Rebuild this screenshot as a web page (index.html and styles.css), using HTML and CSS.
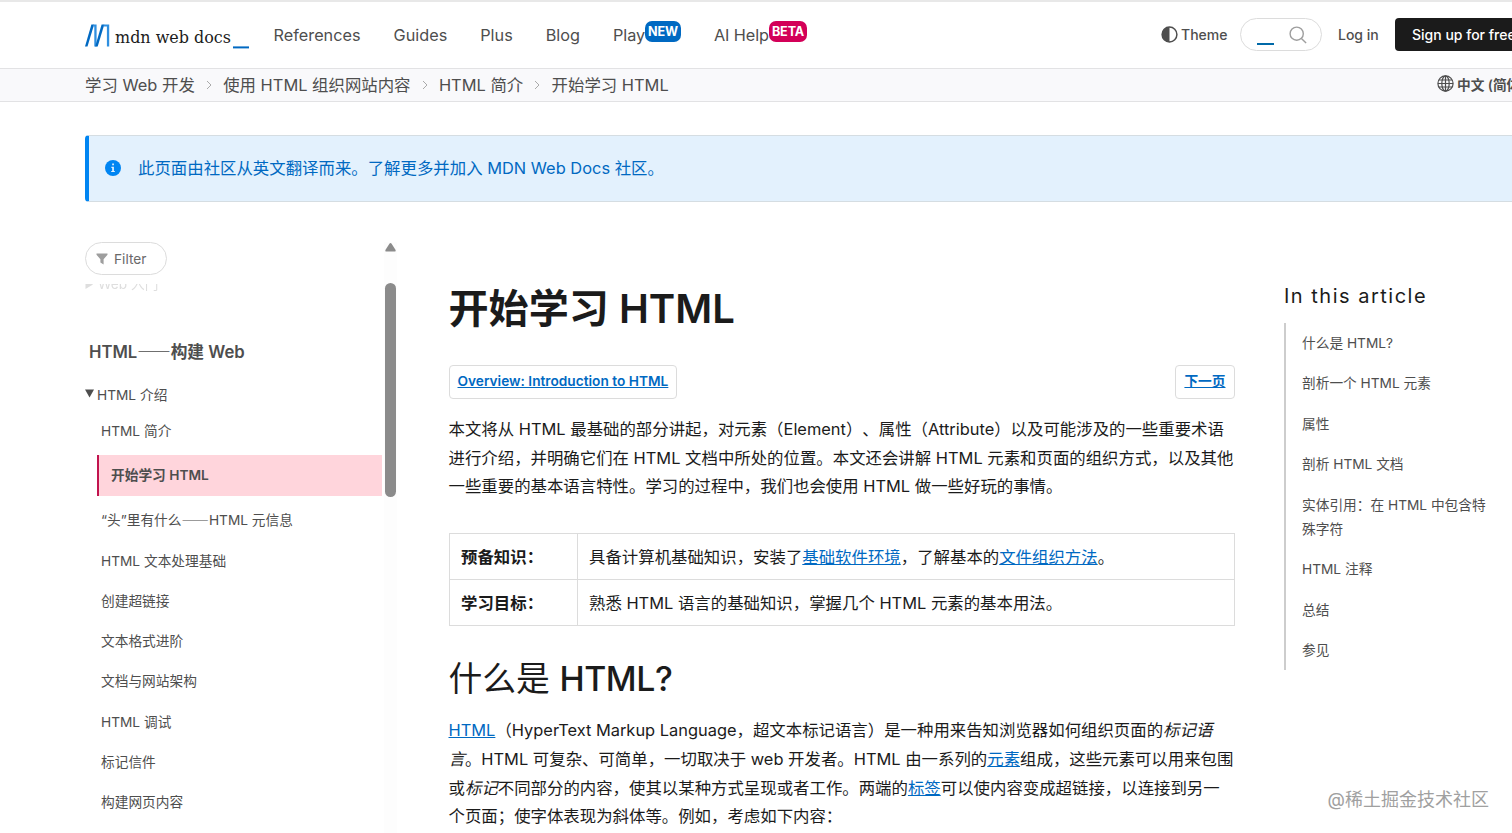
FILE: index.html
```
<!DOCTYPE html>
<html lang="zh-CN">
<head>
  <meta charset="UTF-8">
  <meta name="viewport" content="width=device-width, initial-scale=1.0">
  <title>开始学习 HTML - 学习 Web 开发 | MDN</title>
  <link rel="stylesheet" href="styles.css">
</head>
<body>
  <header class="top-nav">
    <a class="logo" href="#">
      <svg width="164" height="30" viewBox="0 0 164 30">
        <g fill="#0069c2">
          <path d="M6.4 3.5h2.7L2.5 25.5H0z"></path>
          <path d="M8.6 3.5h3v22H9.3v-20h-.9z" fill="#2f8fe0"></path>
          <path d="M16.6 3.5h2.7l-6.6 22h-2.5z"></path>
          <path d="M18.8 3.5h5.4v22h-2.3v-20h-3.5z" fill="#2f8fe0"></path>
          <path d="M148 25.4h16v2h-16z"></path>
        </g>
        <text class="logo-text" x="30" y="21.5" textLength="116" lengthAdjust="spacingAndGlyphs">mdn web docs</text>
      </svg>
    </a>
    <nav class="main-menu">
      <a href="#">References</a>
      <a href="#">Guides</a>
      <a href="#">Plus</a>
      <a href="#">Blog</a>
      <a href="#">Play<sup class="badge new">NEW</sup></a>
      <a href="#">AI Help<sup class="badge beta">BETA</sup></a>
    </nav>
    <div class="actions">
      <button class="theme">
        <svg width="17" height="17" viewBox="0 0 17 17">
          <circle cx="8.5" cy="8.5" r="7.4" fill="none" stroke="#4e4e4e" stroke-width="1.5"></circle>
          <path d="M8.5 1a7.5 7.5 0 0 0 0 15z" fill="#4e4e4e"></path>
        </svg>
        Theme
      </button>
      <div class="search">
        <span class="cursor"></span>
        <svg width="18" height="18" viewBox="0 0 18 18" fill="none" stroke="#9e9e9e" stroke-width="1.4">
          <circle cx="7.7" cy="7.7" r="6.6"></circle>
          <path d="M12.4 12.4l4.7 4.7"></path>
        </svg>
      </div>
      <a class="login" href="#">Log in</a>
      <a class="signup" href="#">Sign up for free</a>
    </div>
  </header>

  <div class="breadcrumbs">
    <a href="#">学习 Web 开发</a>
    <svg class="sep" width="6" height="10" viewBox="0 0 6 10"><path d="M1 1l4 4-4 4"></path></svg>
    <a href="#">使用 HTML 组织网站内容</a>
    <svg class="sep" width="6" height="10" viewBox="0 0 6 10"><path d="M1 1l4 4-4 4"></path></svg>
    <a href="#">HTML 简介</a>
    <svg class="sep" width="6" height="10" viewBox="0 0 6 10"><path d="M1 1l4 4-4 4"></path></svg>
    <a href="#">开始学习 HTML</a>
    <button class="language">
      <svg width="17" height="17" viewBox="0 0 17 17" fill="none" stroke="#4e4e4e" stroke-width="1.2">
        <circle cx="8.5" cy="8.5" r="7.6"></circle>
        <ellipse cx="8.5" cy="8.5" rx="3.7" ry="7.6"></ellipse>
        <path d="M8.5 1v15M1 8.5h15M2 5h13M2 12h13"></path>
      </svg>
      中文 (简体)
    </button>
  </div>

  <div class="notice">
    <svg width="16" height="16" viewBox="0 0 16 16">
      <circle cx="8" cy="8" r="8" fill="#0085f2"></circle>
      <path d="M7.2 3.6h1.7v1.7H7.2zM6.4 6.7h2.5v4.2h.9v1.2H6.2v-1.2h1V7.9h-.8z" fill="#e3f1fd"></path>
    </svg>
    <a href="#">此页面由社区从英文翻译而来。了解更多并加入 MDN Web Docs 社区。</a>
  </div>

  <div class="layout">
    <aside class="sidebar">
      <div class="sidebar-inner">
        <div class="filter">
          <svg width="12" height="12" viewBox="0 0 12 12"><path d="M.5.5h11v1.2L7.6 6.2v5.3L4.4 9.6V6.2L.5 1.7z" fill="#9e9e9e"></path></svg>
          Filter
        </div>
        <div class="faded">
          <svg width="8" height="9" viewBox="0 0 8 9"><path d="M.5 0L8 4.5.5 9z" fill="#dedede"></path></svg>
          <span>Web 入门</span>
        </div>
        <h4>HTML<span class="dash">——</span>构建 Web</h4>
        <div class="summary"><svg width="9" height="9" viewBox="0 0 9 9"><path d="M0 .5h9L4.5 8.5z" fill="#4e4e4e"></path></svg>HTML 介绍</div>
        <ul>
          <li><a href="#">HTML 简介</a></li>
          <li class="current"><a href="#">开始学习 HTML</a></li>
          <li><a href="#">“头”里有什么<span class="dash">——</span>HTML 元信息</a></li>
          <li><a href="#">HTML 文本处理基础</a></li>
          <li><a href="#">创建超链接</a></li>
          <li><a href="#">文本格式进阶</a></li>
          <li><a href="#">文档与网站架构</a></li>
          <li><a href="#">HTML 调试</a></li>
          <li><a href="#">标记信件</a></li>
          <li><a href="#">构建网页内容</a></li>
        </ul>
      </div>
      <div class="scrollbar">
        <svg width="11" height="9" viewBox="0 0 11 9"><path d="M5.5 0Q6.1 0 6.6.8L10.6 7Q11 8.5 10 8.5H1Q0 8.5.4 7L4.4.8Q4.9 0 5.5 0z" fill="#8b8b8b"></path></svg>
        <div class="thumb"></div>
      </div>
    </aside>

    <main class="content">
      <h1>开始学习 HTML</h1>
      <div class="prev-next">
        <a href="#">Overview: Introduction to HTML</a>
        <a href="#">下一页</a>
      </div>
      <p>本文将从 HTML 最基础的部分讲起，对元素（Element）、属性（Attribute）以及可能涉及的一些重要术语<br>进行介绍，并明确它们在 HTML 文档中所处的位置。本文还会讲解 HTML 元素和页面的组织方式，以及其他<br>一些重要的基本语言特性。学习的过程中，我们也会使用 HTML 做一些好玩的事情。</p>
      <table>
        <tbody>
          <tr>
            <th>预备知识：</th>
            <td>具备计算机基础知识，安装了<a href="#">基础软件环境</a>，了解基本的<a href="#">文件组织方法</a>。</td>
          </tr>
          <tr>
            <th>学习目标：</th>
            <td>熟悉 HTML 语言的基础知识，掌握几个 HTML 元素的基本用法。</td>
          </tr>
        </tbody>
      </table>
      <h2>什么是 <span>HTML?</span></h2>
      <p><a href="#">HTML</a>（HyperText Markup Language，超文本标记语言）是一种用来告知浏览器如何组织页面的<em>标记语<br>言</em>。HTML 可复杂、可简单，一切取决于 web 开发者。HTML 由一系列的<a href="#">元素</a>组成，这些元素可以用来包围<br>或<em>标记</em>不同部分的内容，使其以某种方式呈现或者工作。两端的<a href="#">标签</a>可以使内容变成超链接，以连接到另一<br>个页面；使字体表现为斜体等。例如，考虑如下内容：</p>
    </main>

    <aside class="toc">
      <h2>In this article</h2>
      <ul>
        <li><a href="#">什么是 HTML?</a></li>
        <li><a href="#">剖析一个 HTML 元素</a></li>
        <li><a href="#">属性</a></li>
        <li><a href="#">剖析 HTML 文档</a></li>
        <li><a href="#">实体引用：在 HTML 中包含特<br>殊字符</a></li>
        <li><a href="#">HTML 注释</a></li>
        <li><a href="#">总结</a></li>
        <li><a href="#">参见</a></li>
      </ul>
    </aside>
  </div>

  <div class="watermark">@稀土掘金技术社区</div>
</body>
</html>
```
FILE: styles.css
```
* {
  box-sizing: border-box;
}

body {
  margin: 0;
  height: 833px;
  overflow: hidden;
  position: relative;
  background-color: #fff;
  color: #1b1b1b;
  font-family: Inter, "Noto Sans CJK SC", sans-serif;
  font-size: 16.42px;
  text-spacing-trim: space-all;
  white-space: nowrap;
}

a {
  color: inherit;
  text-decoration: none;
}

button {
  border: 0;
  padding: 0;
  background: none;
  font: inherit;
  color: inherit;
}

ul {
  list-style: none;
  margin: 0;
  padding: 0;
}

.dash {
  font-family: "Noto Sans CJK SC", sans-serif;
  line-height: 1;
}

/* header */
.top-nav {
  display: flex;
  align-items: center;
  height: 69px;
  padding-left: 85px;
  border-top: 2px solid #e8e8e8;
  border-bottom: 1px solid #e2e2e4;
  color: #4e4e4e;
}

.top-nav > * {
  flex-shrink: 0;
}

.logo svg {
  display: block;
  margin-top: 2px;
}

.logo-text {
  font-family: "DejaVu Serif", serif;
  font-size: 17px;
  fill: #1b1b1b;
}

.main-menu {
  display: flex;
  gap: 33px;
  margin-left: 24.6px;
  font-size: 16.25px;
}

.badge {
  display: inline-block;
  height: 21px;
  line-height: 21px;
  padding: 0 3px;
  border-radius: 7px;
  color: #fff;
  font-size: 12.6px;
  font-weight: 700;
  vertical-align: 5px;
  margin: -10px 0;
}

.main-menu a:nth-child(n+5) {
  letter-spacing: -0.1px;
}

.new {
  background-color: #0069c2;
}

.beta {
  background-color: #d30058;
}

.actions {
  display: flex;
  align-items: center;
  width: 351px;
  margin-left: auto;
  padding-bottom: 1px;
  font-size: 14px;
  font-weight: 500;
}

.actions > * {
  flex-shrink: 0;
}

.theme {
  display: flex;
  align-items: center;
  gap: 3px;
  width: 79px;
}

.search {
  display: flex;
  align-items: center;
  justify-content: space-between;
  width: 82px;
  height: 33px;
  padding: 0 14px 0 16px;
  border: 1px solid #dcdcdc;
  border-radius: 17px;
}

.cursor {
  width: 17px;
  height: 2px;
  margin-top: 18px;
  background-color: #0069a8;
}

.login {
  margin-left: 16px;
  width: 57px;
}

.signup {
  height: 33px;
  line-height: 33px;
  padding: 0 17px;
  border-radius: 4px;
  background-color: #1b1b1b;
  color: #fff;
}

.breadcrumbs {
  display: flex;
  align-items: center;
  height: 33px;
  padding: 0 0 3px 85px;
  border-bottom: 1px solid #e2e2e4;
  background-color: #f9f9fb;
  color: #4e4e4e;
}

.sep {
  margin: 2px 11.2px 0;
  fill: none;
  stroke: #aaa;
}

.language {
  display: flex;
  align-items: center;
  gap: 3px;
  width: 75px;
  margin-left: auto;
  font-size: 13.7px;
  font-weight: 600;
}

.language svg {
  flex-shrink: 0;
}

.notice {
  display: flex;
  align-items: center;
  gap: 17px;
  height: 67px;
  margin: 33px 0 0 85px;
  padding: 0 0 2px 16px;
  border: 1px solid #d5dde2;
  border-left: 4px solid #0085f2;
  border-right: 0;
  border-radius: 4px 0 0 4px;
  background-color: #e3f1fd;
  color: #0069c2;
}

.notice a {
  margin-top: -2px;
}

.layout {
  display: grid;
  grid-template-columns: 312px 786px 1fr;
  padding-left: 85px;
}

/* sidebar */
.sidebar {
  display: flex;
  height: 631px;
  padding-top: 40px;
  color: #4e4e4e;
  font-size: 13.7px;
}

.sidebar-inner {
  width: 297px;
}

.filter {
  display: flex;
  align-items: center;
  gap: 6px;
  width: 82px;
  height: 33px;
  padding-left: 10px;
  border: 1px solid #dcdcdc;
  border-radius: 17px;
  color: #696969;
}

.faded {
  display: flex;
  align-items: center;
  gap: 5px;
  height: 17px;
  margin-top: 1px;
  overflow: hidden;
  color: #dedede;
  -webkit-mask-image: linear-gradient(transparent 50%, #000 50%);
  mask-image: linear-gradient(transparent 50%, #000 50%);
}

.faded span {
  line-height: 17px;
}

.sidebar h4 {
  margin: 47px 0 0 4px;
  font-size: 16.7px;
  font-weight: 600;
  line-height: 24px;
}

.summary {
  display: flex;
  align-items: center;
  gap: 3px;
  height: 24px;
  margin-top: 17.5px;
}

.sidebar li {
  height: 24px;
  line-height: 24px;
  margin: 0 0 16.3px 16px;
}

.sidebar ul {
  padding-top: 13.5px;
}

.sidebar .current {
  height: 41px;
  line-height: 40px;
  margin: -4px 0 12px 12px;
  padding-left: 12px;
  border-left: 2px solid #c1134e;
  background-color: #ffd5dc;
  font-weight: 600;
}

.scrollbar {
  width: 15px;
  padding: 1px 0 0 3px;
  background: linear-gradient(90deg, transparent 2px, #fdfdfd 2px);
}

.scrollbar svg {
  display: block;
}

.thumb {
  width: 11px;
  height: 214px;
  margin-top: 31px;
  border-radius: 6px;
  background-color: #8b8b8b;
}

/* article */
.content {
  margin-left: 51.5px;
  width: 786px;
}

h1 {
  margin: 79px 0 0;
  font-size: 40.1px;
  font-weight: 600;
  line-height: 56px;
}

.prev-next {
  display: flex;
  justify-content: space-between;
  margin-top: 28px;
}

.prev-next a {
  height: 34px;
  line-height: 31px;
  padding: 0 8px;
  border: 1px solid #dcdcdc;
  border-radius: 4px;
  font-size: 13.7px;
  font-weight: 600;
}

.content a {
  color: #0069c2;
  text-decoration: underline;
}

.content p {
  margin: 16px 0 0;
  line-height: 28.7px;
}

table {
  width: 100%;
  margin-top: 32px;
  border-collapse: collapse;
}

th, td {
  height: 46px;
  padding: 0 11.5px 2px;
  border: 1px solid #dcdcdc;
  text-align: left;
}

th {
  width: 128px;
  font-weight: 700;
}

.content h2 {
  margin: 29px 0 0;
  font-size: 33.8px;
  font-weight: 400;
  line-height: 48px;
}

.content h2 span {
  font-weight: 500;
  letter-spacing: -0.4px;
}

.content h2 + p {
  margin-top: 13px;
}

/* table of contents */
.toc {
  margin-left: 101px;
  padding-top: 80px;
  color: #4e4e4e;
  font-size: 13.7px;
}

.toc h2 {
  margin: 0;
  color: #1b1b1b;
  font-size: 20px;
  font-weight: 400;
  letter-spacing: 1.5px;
  line-height: 28px;
}

.toc ul {
  margin-top: 13px;
  padding: 8px 0 0 16px;
  border-left: 2px solid #cdcdcd;
}

.toc li {
  line-height: 24.2px;
  padding-bottom: 16.2px;
}

.toc li:last-child {
  padding-bottom: 8px;
}

.watermark {
  position: absolute;
  right: 23px;
  bottom: 22px;
  color: #a0a0a0;
  font-size: 18px;
}
```
